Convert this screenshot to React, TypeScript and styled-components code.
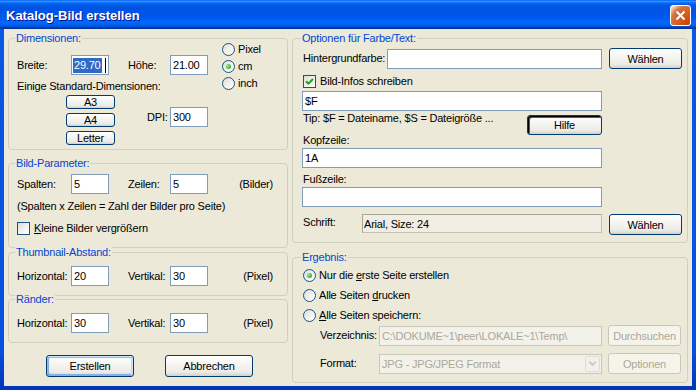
import React from 'react';
import styled, { createGlobalStyle } from 'styled-components';

const GlobalStyle = createGlobalStyle`
  html, body {
    margin: 0;
    padding: 0;
  }
  body {
    font-family: "Liberation Sans", Arial, sans-serif;
    font-size: 11px;
    letter-spacing: -0.2px;
    color: #000;
  }
`;

const Window = styled.div`
  width: 696px;
  height: 390px;
  display: flex;
  flex-direction: column;
  background: linear-gradient(180deg, #0a58e6 0%, #0550e0 90%, #0333b8 100%);
  overflow: hidden;
`;

const TitleBar = styled.div`
  flex: none;
  height: 29px;
  display: flex;
  align-items: center;
  justify-content: space-between;
  padding: 0 5px 0 6px;
  background: linear-gradient(
    180deg,
    #0058ee 0%,
    #3593ff 4%,
    #288eff 6%,
    #127dff 8%,
    #036ffc 10%,
    #0262ee 14%,
    #0057e5 20%,
    #0054e3 24%,
    #0055eb 56%,
    #005bf5 66%,
    #026afe 76%,
    #0062ef 86%,
    #0052d6 92%,
    #0040ab 94%,
    #003092 100%
  );
`;

const Title = styled.span`
  color: #fff;
  font-weight: bold;
  font-size: 13px;
  letter-spacing: 0;
  text-shadow: 1px 1px #0f1089;
  margin-top: 1px;
`;

const CloseButton = styled.div`
  width: 21px;
  height: 21px;
  box-sizing: border-box;
  margin-top: 2px;
  border: 1px solid #fff;
  border-radius: 3px;
  display: flex;
  align-items: center;
  justify-content: center;
  background: radial-gradient(
    circle at 90% 90%,
    #cc4600 0%,
    #dc6527 55%,
    #cd7546 70%,
    #ffccb2 90%,
    #fff 100%
  );
`;

const Client = styled.div`
  flex: 1;
  margin: 0 4px 4px;
  padding: 0 4px;
  display: flex;
  gap: 4px;
  background: #ece9d8;
`;

const Column = styled.div<{ $w: number }>`
  width: ${p => p.$w}px;
  display: flex;
  flex-direction: column;
`;

const GroupBox = styled.div<{ $top: number; $height: number; $pad: string }>`
  position: relative;
  box-sizing: border-box;
  margin-top: ${p => p.$top}px;
  height: ${p => p.$height}px;
  border: 1px solid #d0d0bf;
  border-radius: 4px;
  padding: ${p => p.$pad};
`;

const Legend = styled.span<{ $left: number }>`
  position: absolute;
  top: -7px;
  left: ${p => p.$left}px;
  padding: 0 1px;
  line-height: 13px;
  color: #0046d5;
  background: #ece9d8;
  white-space: nowrap;
`;

const Text = styled.span`
  line-height: 13px;
  white-space: nowrap;
`;

const FieldGrid = styled.div`
  display: grid;
  grid-template-columns: 54px 38px 61px 38px 1fr;
  align-items: center;
  height: 20px;
`;

const SecondLabel = styled(Text)`
  padding-left: 19px;
`;

const Unit = styled(Text)`
  text-align: right;
`;

const TextBox = styled.div<{ $w?: number; $disabled?: boolean }>`
  box-sizing: border-box;
  width: ${p => (p.$w ? `${p.$w}px` : '100%')};
  height: 20px;
  display: flex;
  align-items: center;
  padding: 0 2px;
  border: 1px solid ${p => (p.$disabled ? '#c9c7ba' : '#7f9db9')};
  background: ${p => (p.$disabled ? '#f2f1ea' : '#fff')};
  color: ${p => (p.$disabled ? '#aca899' : '#000')};
  white-space: nowrap;
  overflow: hidden;
`;

const Selection = styled.span`
  line-height: 15px;
  padding: 0 1px;
  margin-left: -1px;
  background: #316ac5;
  color: #fff;
`;

const Caret = styled.span`
  width: 1px;
  height: 15px;
  margin-left: 3px;
  background: #000;
`;

const DimLayout = styled.div`
  display: flex;
`;

const DimFields = styled.div`
  width: 192px;
  margin-top: 12px;
  display: flex;
  flex-direction: column;
`;

const Hint = styled(Text)`
  margin-top: 5px;
`;

const PresetArea = styled.div`
  margin-top: 2px;
  display: flex;
`;

const PresetStack = styled.div`
  margin-left: 49px;
  display: flex;
  flex-direction: column;
  gap: 4px;
`;

const DpiRow = styled.div`
  margin: 12px 0 0 32px;
  display: flex;
  align-items: center;
  height: 20px;
`;

const DpiLabel = styled(Text)`
  width: 23px;
`;

const RadioStack = styled.div`
  margin-left: 13px;
  display: flex;
  flex-direction: column;
  gap: 4px;
`;

const OptionRow = styled.label`
  display: flex;
  align-items: center;
  gap: 3px;
  height: 13px;
`;

const Radio = styled.span<{ $checked?: boolean }>`
  flex: none;
  box-sizing: border-box;
  width: 13px;
  height: 13px;
  border-radius: 50%;
  border: 1px solid #1c5180;
  background: linear-gradient(135deg, #dcdcd7 0%, #f4f4f2 60%, #fff 100%);
  display: flex;
  align-items: center;
  justify-content: center;
  &::after {
    content: '';
    display: ${p => (p.$checked ? 'block' : 'none')};
    width: 5px;
    height: 5px;
    border-radius: 50%;
    background: radial-gradient(circle at 35% 35%, #a0f09c 0%, #4fc64c 45%, #1d9a1d 100%);
  }
`;

const CheckBox = styled.span`
  flex: none;
  box-sizing: border-box;
  width: 13px;
  height: 13px;
  border: 1px solid #1c5180;
  background: linear-gradient(135deg, #dcdcd7 0%, #f4f4f2 60%, #fff 100%);
  display: flex;
  align-items: center;
  justify-content: center;
`;

const CheckRow = styled.label<{ $mt: number; $indent?: number }>`
  display: flex;
  align-items: center;
  gap: 4px;
  height: 13px;
  margin-top: ${p => p.$mt}px;
  margin-left: ${p => p.$indent ?? 0}px;
`;

const Note = styled(Text)`
  display: block;
  margin-top: 6px;
`;

const PushButton = styled.button<{ $w: number; $h: number; $ml?: number; $look?: 'default' | 'focus' }>`
  flex: none;
  box-sizing: border-box;
  width: ${p => p.$w}px;
  height: ${p => p.$h}px;
  margin: 0 0 0 ${p => p.$ml ?? 0}px;
  padding: 0;
  font: inherit;
  letter-spacing: inherit;
  line-height: 12px;
  color: #000;
  border: 1px solid #003c74;
  border-radius: 3px;
  background: linear-gradient(180deg, #fff 0%, #f7f7f4 30%, #ecebe6 80%, #d6d0c5 100%);
  box-shadow: ${p =>
    p.$look === 'default'
      ? 'inset -1px 1px #cee7ff, inset 1px 2px #98b8ea, inset -2px 2px #bcd4f6, inset 1px -1px #89ade4, inset 2px -2px #89ade4'
      : p.$look === 'focus'
        ? 'inset 1px 1px #000, inset 2px 2px #5a5a5a'
        : 'none'};
  &:disabled {
    color: #aca899;
    border-color: #c9c7ba;
    background: #f5f4ea;
  }
`;

const ButtonBar = styled.div`
  margin-top: 12px;
  padding-left: 38px;
  display: flex;
  gap: 31px;
`;

const FormRow = styled.div<{ $mt?: number; $align?: string }>`
  display: flex;
  align-items: ${p => p.$align ?? 'center'};
  margin-top: ${p => p.$mt ?? 0}px;
`;

const RowLabel = styled(Text)<{ $w: number; $indent?: number; $lh?: number }>`
  width: ${p => p.$w}px;
  margin-left: ${p => p.$indent ?? 0}px;
  padding-left: 1px;
  box-sizing: border-box;
  line-height: ${p => p.$lh ?? 13}px;
`;

const StackLabel = styled(Text)<{ $mt: number }>`
  display: block;
  margin-top: ${p => p.$mt}px;
  padding-left: 1px;
`;

const StackBox = styled(TextBox)<{ $mt: number }>`
  margin-top: ${p => p.$mt}px;
`;

const TipRow = styled.div`
  width: 300px;
  height: 20px;
  margin-top: 1px;
  display: flex;
  align-items: flex-start;
  justify-content: space-between;
`;

const TipButton = styled(PushButton)`
  margin-top: 3px;
`;

const ReadBox = styled.div`
  box-sizing: border-box;
  width: 240px;
  height: 19px;
  padding-left: 1px;
  display: flex;
  align-items: center;
  border: 1px solid #c2bfb0;
  border-top-color: #a7a595;
  border-left-color: #a7a595;
  background: #efede4;
  white-space: nowrap;
`;

const RadioList = styled.div`
  display: flex;
  flex-direction: column;
  gap: 7px;
`;

const SelectBox = styled(TextBox)`
  justify-content: space-between;
  padding-right: 0;
`;

const SelectArrow = styled.span`
  width: 15px;
  height: 16px;
  margin-right: 1px;
  box-sizing: border-box;
  border: 1px solid #e0ded3;
  border-radius: 2px;
  background: #f1f0ea;
  display: flex;
  align-items: center;
  justify-content: center;
`;

function App() {
  return (
    <>
      <GlobalStyle />
      <Window>
        <TitleBar>
          <Title>Katalog-Bild erstellen</Title>
          <CloseButton>
            <svg width="11" height="11" viewBox="0 0 11 11">
              <path d="M1.5 1.5L9.5 9.5M9.5 1.5L1.5 9.5" stroke="#fff" strokeWidth="2" />
            </svg>
          </CloseButton>
        </TitleBar>
        <Client>
          <Column $w={280}>
            <GroupBox $top={9} $height={112} $pad="4px 0 0 8px">
              <Legend $left={6}>Dimensionen:</Legend>
              <DimLayout>
                <DimFields>
                  <FieldGrid>
                    <Text>Breite:</Text>
                    <TextBox>
                      <Selection>29.70</Selection>
                      <Caret />
                    </TextBox>
                    <SecondLabel>Höhe:</SecondLabel>
                    <TextBox>21.00</TextBox>
                  </FieldGrid>
                  <Hint>Einige Standard-Dimensionen:</Hint>
                  <PresetArea>
                    <PresetStack>
                      <PushButton $w={49} $h={14}>A3</PushButton>
                      <PushButton $w={49} $h={14}>A4</PushButton>
                      <PushButton $w={49} $h={14}>Letter</PushButton>
                    </PresetStack>
                    <DpiRow>
                      <DpiLabel>DPI:</DpiLabel>
                      <TextBox $w={38}>300</TextBox>
                    </DpiRow>
                  </PresetArea>
                </DimFields>
                <RadioStack>
                  <OptionRow>
                    <Radio />
                    <Text>Pixel</Text>
                  </OptionRow>
                  <OptionRow>
                    <Radio $checked />
                    <Text>cm</Text>
                  </OptionRow>
                  <OptionRow>
                    <Radio />
                    <Text>inch</Text>
                  </OptionRow>
                </RadioStack>
              </DimLayout>
            </GroupBox>

            <GroupBox $top={13} $height={85} $pad="10px 14px 0 8px">
              <Legend $left={6}>Bild-Parameter:</Legend>
              <FieldGrid>
                <Text>Spalten:</Text>
                <TextBox>5</TextBox>
                <SecondLabel>Zeilen:</SecondLabel>
                <TextBox>5</TextBox>
                <Unit>(Bilder)</Unit>
              </FieldGrid>
              <Note>(Spalten x Zeilen = Zahl der Bilder pro Seite)</Note>
              <CheckRow $mt={9}>
                <CheckBox />
                <Text>
                  <u>K</u>leine Bilder vergrößern
                </Text>
              </CheckRow>
            </GroupBox>

            <GroupBox $top={4} $height={44} $pad="13px 14px 0 8px">
              <Legend $left={6}>Thumbnail-Abstand:</Legend>
              <FieldGrid>
                <Text>Horizontal:</Text>
                <TextBox>20</TextBox>
                <SecondLabel>Vertikal:</SecondLabel>
                <TextBox>30</TextBox>
                <Unit>(Pixel)</Unit>
              </FieldGrid>
            </GroupBox>

            <GroupBox $top={3} $height={44} $pad="13px 14px 0 8px">
              <Legend $left={6}>Ränder:</Legend>
              <FieldGrid>
                <Text>Horizontal:</Text>
                <TextBox>30</TextBox>
                <SecondLabel>Vertikal:</SecondLabel>
                <TextBox>30</TextBox>
                <Unit>(Pixel)</Unit>
              </FieldGrid>
            </GroupBox>

            <ButtonBar>
              <PushButton $w={88} $h={22} $look="default">Erstellen</PushButton>
              <PushButton $w={88} $h={22}>Abbrechen</PushButton>
            </ButtonBar>
          </Column>

          <Column $w={396}>
            <GroupBox $top={9} $height={205} $pad="9px 0 0 9px">
              <Legend $left={8}>Optionen für Farbe/Text:</Legend>
              <FormRow>
                <RowLabel $w={85}>Hintergrundfarbe:</RowLabel>
                <TextBox $w={215} />
                <PushButton $w={73} $h={21} $ml={7}>Wählen</PushButton>
              </FormRow>
              <CheckRow $mt={6} $indent={1}>
                <CheckBox>
                  <svg width="9" height="9" viewBox="0 0 9 9">
                    <path d="M1 4.2L3.4 6.6L8 2" fill="none" stroke="#21a121" strokeWidth="2" />
                  </svg>
                </CheckBox>
                <Text>Bild-Infos schreiben</Text>
              </CheckRow>
              <StackBox $w={300} $mt={3}>$F</StackBox>
              <TipRow>
                <RowLabel $w={220}>Tip: $F = Dateiname, $S = Dateigröße ...</RowLabel>
                <TipButton $w={75} $h={20} $look="focus">Hilfe</TipButton>
              </TipRow>
              <StackLabel $mt={2}>Kopfzeile:</StackLabel>
              <StackBox $w={300} $mt={1}>1A</StackBox>
              <StackLabel $mt={5}>Fußzeile:</StackLabel>
              <StackBox $w={300} $mt={1} />
              <FormRow $mt={7} $align="flex-start">
                <RowLabel $w={60} $lh={17}>Schrift:</RowLabel>
                <ReadBox>Arial, Size: 24</ReadBox>
                <PushButton $w={73} $h={21} $ml={7}>Wählen</PushButton>
              </FormRow>
            </GroupBox>

            <GroupBox $top={14} $height={126} $pad="11px 0 0 10px">
              <Legend $left={8}>Ergebnis:</Legend>
              <RadioList>
                <OptionRow>
                  <Radio $checked />
                  <Text>
                    Nur die <u>e</u>rste Seite erstellen
                  </Text>
                </OptionRow>
                <OptionRow>
                  <Radio />
                  <Text>
                    Alle Seiten <u>d</u>rucken
                  </Text>
                </OptionRow>
                <OptionRow>
                  <Radio />
                  <Text>
                    <u>A</u>lle Seiten speichern:
                  </Text>
                </OptionRow>
              </RadioList>
              <FormRow $mt={3}>
                <RowLabel $w={60} $indent={16}>Verzeichnis:</RowLabel>
                <TextBox $w={223} $disabled>C:\DOKUME~1\peer\LOKALE~1\Temp\</TextBox>
                <PushButton $w={73} $h={21} $ml={6} disabled>Durchsuchen</PushButton>
              </FormRow>
              <FormRow $mt={7}>
                <RowLabel $w={60} $indent={16}>Format:</RowLabel>
                <SelectBox $w={223} $disabled>
                  JPG - JPG/JPEG Format
                  <SelectArrow>
                    <svg width="7" height="5" viewBox="0 0 7 5">
                      <path d="M0.5 0.8L3.5 3.8L6.5 0.8" fill="none" stroke="#c9c7ba" strokeWidth="1.6" />
                    </svg>
                  </SelectArrow>
                </SelectBox>
                <PushButton $w={73} $h={21} $ml={6} disabled>Optionen</PushButton>
              </FormRow>
            </GroupBox>
          </Column>
        </Client>
      </Window>
    </>
  );
}

export default App;
